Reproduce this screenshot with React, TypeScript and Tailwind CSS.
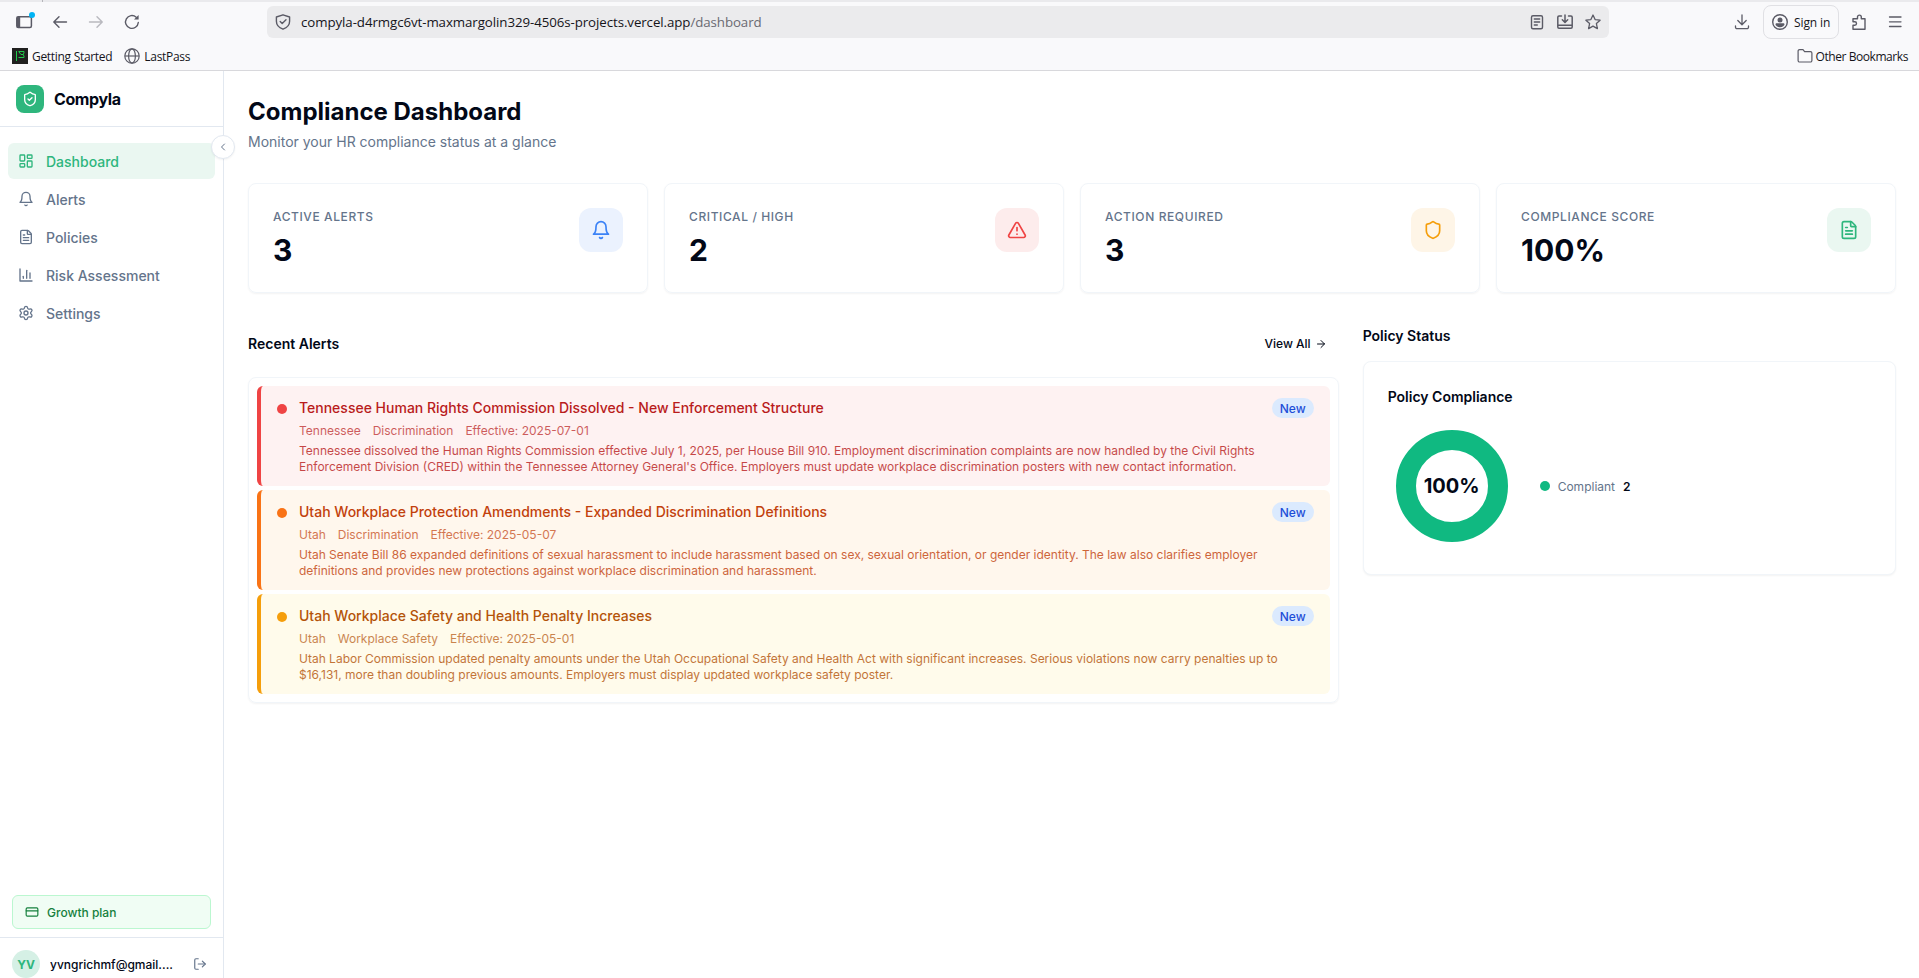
import React from "react";
import { ArrowRight, ChevronLeft, CreditCard, FileText, LayoutDashboard, LogOut, Settings, Shield, ShieldCheck, TriangleAlert } from "lucide-react";

type IconProps = { className?: string; strokeWidth?: number };

const Svg = ({ className, strokeWidth = 2, children }: IconProps & { children: React.ReactNode }) => (
  <svg
    viewBox="0 0 24 24"
    fill="none"
    stroke="currentColor"
    strokeWidth={strokeWidth}
    strokeLinecap="round"
    strokeLinejoin="round"
    className={className}
  >
    {children}
  </svg>
);

const BellIcon = (props: IconProps) => (
  <Svg {...props}>
    <path d="M6 8a6 6 0 0 1 12 0c0 7 3 9 3 9H3s3-2 3-9" />
    <path d="M10.3 21a1.94 1.94 0 0 0 3.4 0" />
  </Svg>
);

const ChartIcon = (props: IconProps) => (
  <Svg {...props}>
    <path d="M3 3v18h18" />
    <path d="M18 17V9" />
    <path d="M13 17V5" />
    <path d="M8 17v-3" />
  </Svg>
);

const navItems = [
  { label: "Dashboard", icon: LayoutDashboard, active: true },
  { label: "Alerts", icon: BellIcon },
  { label: "Policies", icon: FileText },
  { label: "Risk Assessment", icon: ChartIcon },
  { label: "Settings", icon: Settings },
];

const stats = [
  { label: "Active Alerts", value: "3", icon: BellIcon, color: "bg-[#ebf2fe] text-[#3b82f6]" },
  { label: "Critical / High", value: "2", icon: TriangleAlert, color: "bg-[#fdecec] text-[#ef4444]" },
  { label: "Action Required", value: "3", icon: Shield, color: "bg-[#fef5e7] text-[#f59e0b]" },
  { label: "Compliance Score", value: "100%", icon: FileText, color: "bg-[#eaf7f1] text-[#2eb67d]" },
];

const alerts = [
  {
    title: "Tennessee Human Rights Commission Dissolved - New Enforcement Structure",
    meta: ["Tennessee", "Discrimination", "Effective: 2025-07-01"],
    body: "Tennessee dissolved the Human Rights Commission effective July 1, 2025, per House Bill 910. Employment discrimination complaints are now handled by the Civil Rights Enforcement Division (CRED) within the Tennessee Attorney General's Office. Employers must update workplace discrimination posters with new contact information.",
    box: "bg-[#fef2f2] border-[#ef4444] text-[#b91c1c]",
    dot: "bg-[#ef4444]",
  },
  {
    title: "Utah Workplace Protection Amendments - Expanded Discrimination Definitions",
    meta: ["Utah", "Discrimination", "Effective: 2025-05-07"],
    body: "Utah Senate Bill 86 expanded definitions of sexual harassment to include harassment based on sex, sexual orientation, or gender identity. The law also clarifies employer definitions and provides new protections against workplace discrimination and harassment.",
    box: "bg-[#fff7ed] border-[#f97316] text-[#c2410c]",
    dot: "bg-[#f97316]",
  },
  {
    title: "Utah Workplace Safety and Health Penalty Increases",
    meta: ["Utah", "Workplace Safety", "Effective: 2025-05-01"],
    body: "Utah Labor Commission updated penalty amounts under the Utah Occupational Safety and Health Act with significant increases. Serious violations now carry penalties up to $16,131, more than doubling previous amounts. Employers must display updated workplace safety poster.",
    box: "bg-[#fffbeb] border-[#f59e0b] text-[#b45309]",
    dot: "bg-[#f59e0b]",
  },
];

function BrowserBar() {
  return (
    <div className="h-[71px] shrink-0 bg-[#f9f9fb] border-b border-[#d8d8dc] text-[#5b5b66] font-['Open_Sans',sans-serif]">
      <div className="h-0.5 bg-[#eaeaed]">
        <div className="ml-[42px] w-px h-0.5 bg-[#b5b5ba]" />
      </div>
      <div className="flex items-center h-10 pl-4 pr-[17px]">
        <svg width="20" height="20" viewBox="0 0 20 20" fill="none">
          <rect x="0.8" y="4.8" width="14.6" height="10.6" rx="1.5" stroke="currentColor" strokeWidth="1.5" />
          <rect x="0.8" y="4.8" width="3.4" height="10.6" fill="currentColor" />
          <circle cx="16" cy="3" r="3" fill="#00b3f4" />
        </svg>
        <svg className="ml-4" width="16" height="16" viewBox="0 0 16 16" fill="none" stroke="currentColor" strokeWidth="1.4" strokeLinecap="round" strokeLinejoin="round">
          <path d="M14.5 8H2M7 2.8 1.8 8 7 13.2" />
        </svg>
        <svg className="ml-5 opacity-40" width="16" height="16" viewBox="0 0 16 16" fill="none" stroke="currentColor" strokeWidth="1.4" strokeLinecap="round" strokeLinejoin="round">
          <path d="M1.5 8H14M9 2.8 14.2 8 9 13.2" />
        </svg>
        <svg className="ml-5" width="16" height="16" viewBox="0 0 16 16" fill="none" stroke="currentColor" strokeWidth="1.4" strokeLinecap="round">
          <path d="M14.3 8.5A6.4 6.4 0 1 1 12.2 3.2" />
          <path d="M14.6 1v4.6H10z" fill="currentColor" stroke="none" />
        </svg>

        <div className="ml-[127px] flex h-8 w-[1342px] shrink-0 items-center rounded-md bg-[#ebebed] pl-2 pr-2">
          <svg width="16" height="16" viewBox="0 0 16 16" fill="none" stroke="currentColor" strokeWidth="1.4" strokeLinecap="round" strokeLinejoin="round">
            <path d="M8 .8 14.6 3v4.2c0 3.8-2.4 6.4-6.6 8-4.2-1.6-6.6-4.2-6.6-8V3z" />
            <path d="m5.2 7.6 2 2 3.8-3.8" />
          </svg>
          <span className="ml-[10px] pt-0.5 text-[13.3px] tracking-[-0.08px] text-[#15141a] whitespace-nowrap">
            compyla-d4rmgc6vt-maxmargolin329-4506s-projects.vercel.app<span className="text-[#6a6a72]">/dashboard</span>
          </span>
          <div className="ml-auto flex items-center gap-3">
            <svg width="16" height="16" viewBox="0 0 16 16" fill="none" stroke="currentColor" strokeWidth="1.4" strokeLinecap="round">
              <rect x="2.5" y="1.7" width="11" height="13" rx="1.5" />
              <path d="M5.3 5h5.4M5.3 8h5.4M5.3 11h3" />
            </svg>
            <svg width="16" height="16" viewBox="0 0 16 16" fill="none" stroke="currentColor" strokeWidth="1.5" strokeLinecap="round" strokeLinejoin="round">
              <path d="M4.5 2H2A1.2 1.2 0 0 0 .8 3.2V13A1.2 1.2 0 0 0 2 14.2h12a1.2 1.2 0 0 0 1.2-1.2V3.2A1.2 1.2 0 0 0 14 2h-2.5M1 11.2h14M8 1v7.3M5.3 5.8 8 8.5l2.7-2.7" />
            </svg>
            <svg width="16" height="16" viewBox="0 0 16 16" fill="none" stroke="currentColor" strokeWidth="1.3" strokeLinejoin="round">
              <path d="m8 1 2.1 4.6 5 .6-3.7 3.4 1 5L8 12.1l-4.4 2.5 1-5L.9 6.2l5-.6z" />
            </svg>
          </div>
        </div>

        <svg className="ml-auto" width="16" height="16" viewBox="0 0 16 16" fill="none" stroke="currentColor" strokeWidth="1.3" strokeLinecap="round" strokeLinejoin="round">
          <path d="M8 1v9.5M3.8 6.5 8 10.7l4.2-4.2M1.5 12v1.2A1.5 1.5 0 0 0 3 14.7h10a1.5 1.5 0 0 0 1.5-1.5V12" />
        </svg>
        <div className="ml-[13px] flex h-[34px] w-[76px] items-center rounded-lg border border-[#e0e0e4] pl-2">
          <svg width="16" height="16" viewBox="0 0 16 16" fill="none">
            <circle cx="8" cy="8" r="7.3" stroke="currentColor" strokeWidth="1.4" />
            <circle cx="8" cy="5.9" r="2.5" fill="currentColor" />
            <path d="M3.5 10.5c0-.8.5-1.2 1.3-1.2h6.4c.8 0 1.3.4 1.3 1.2 0 1-2 2.8-4.5 2.8s-4.5-1.8-4.5-2.8z" fill="currentColor" />
          </svg>
          <span className="ml-1.5 pt-0.5 text-xs tracking-[-0.1px] text-[#15141a] whitespace-nowrap">Sign in</span>
        </div>
        <svg className="ml-3" width="16" height="16" viewBox="0 0 16 16" fill="none" stroke="currentColor" strokeWidth="1.4" strokeLinejoin="round">
          <path d="M2 15.2v-4h1.8a1.7 1.7 0 0 0 0-3.4H2v-3h4.5V3a1.9 1.9 0 0 1 3.8 0v1.8H14v10.4z" />
        </svg>
        <svg className="ml-5" width="16" height="16" viewBox="0 0 16 16" stroke="currentColor" strokeWidth="1.3" strokeLinecap="round">
          <path d="M2.500 3H14M2.500 7.800H14M2.500 12.500H14" />
        </svg>
      </div>

      <div className="flex h-7 items-center pl-3 pr-3 text-xs tracking-[-0.3px] text-[#15141a]">
        <svg width="16" height="16" viewBox="0 0 16 16" fill="none">
          <rect width="16" height="16" fill="#20201f" />
          <path d="M4.5 3v10M6.500 3.500H12M7 4l2 2.500h2.500M12 3.500V5l-1 1.500 1 1.500v1.500H6.500" stroke="#1fc94b" />
        </svg>
        <span className="ml-1 pt-0.5">Getting Started</span>
        <svg className="ml-3 text-[#5b5b66]" width="16" height="16" viewBox="0 0 16 16" fill="none" stroke="currentColor" strokeWidth="1.2">
          <circle cx="8" cy="8" r="7.2" />
          <ellipse cx="8" cy="8" rx="3.4" ry="7.2" />
          <path d="M1 8h14" />
        </svg>
        <span className="ml-1 pt-0.5">LastPass</span>
        <svg className="ml-auto text-[#5b5b66]" width="16" height="16" viewBox="0 0 16 16" fill="none" stroke="currentColor" strokeWidth="1.2" strokeLinejoin="round">
          <path d="M1.1 3.1a1.5 1.5 0 0 1 1.5-1.5H6l1.6 2h5.8a1.5 1.5 0 0 1 1.5 1.5v7.4a1.5 1.5 0 0 1-1.5 1.5H2.600a1.5 1.5 0 0 1-1.5-1.5z" />
        </svg>
        <span className="ml-[3px] pt-0.5 tracking-[-0.43px]">Other Bookmarks</span>
      </div>
    </div>
  );
}

function Sidebar() {
  return (
    <aside className="relative flex w-56 shrink-0 flex-col border-r border-[#e2e8f0] bg-white">
      <div className="flex h-14 shrink-0 items-center gap-2.5 border-b border-[#e2e8f0] px-4">
        <div className="flex size-7 items-center justify-center rounded-lg bg-[#2eb67d] text-white">
          <ShieldCheck size={16} />
        </div>
        <span className="text-base font-bold tracking-tight">Compyla</span>
      </div>

      <button className="absolute top-16 -right-3 flex size-6 items-center justify-center rounded-full border border-[#e2e8f0] bg-white text-[#64748b] shadow-xs">
        <ChevronLeft size={12} />
      </button>

      <nav className="flex flex-1 flex-col gap-0.5 px-2 py-4">
        {navItems.map(({ label, icon: Icon, active }) => (
          <a
            key={label}
            className={`flex h-9 items-center gap-3 rounded-md px-2.5 text-sm font-medium ${
              active ? "bg-[#eaf7f1] text-[#2eb67d]" : "text-[#64748b]"
            }`}
          >
            <Icon className="size-4" />
            <span className="pt-0.5">{label}</span>
          </a>
        ))}
      </nav>

      <div className="px-3 pb-2">
        <div className="flex h-[34px] items-center gap-2 rounded-md border border-[#bbf7d0] bg-[#f0fdf4] px-3 text-xs font-medium text-[#15803d]">
          <CreditCard size={14} />
          <span className="pt-0.5">Growth plan</span>
        </div>
      </div>
      <div className="flex shrink-0 items-center border-t border-[#e2e8f0] px-3 pt-3">
        <div className="flex size-7 items-center justify-center rounded-full bg-[#d5f0e5] pt-0.5 text-xs font-bold text-[#2eb67d]">YV</div>
        <span className="ml-2.5 w-[125px] truncate pt-0.5 text-xs font-medium">yvngrichmf@gmail....</span>
        <LogOut size={14} className="ml-auto mr-1 text-[#64748b]" />
      </div>
    </aside>
  );
}

function PolicyCard() {
  return (
    <div className="h-[214px] rounded-lg border border-[#f1f5f9] bg-white p-6 shadow-xs">
      <h3 className="pt-px text-sm font-semibold leading-5">Policy Compliance</h3>
      <div className="mt-[15px] flex items-center gap-6">
        <div className="relative size-32">
          <svg viewBox="0 0 128 128" className="size-32">
            <circle cx="64" cy="64" r="46" fill="none" stroke="#10b981" strokeWidth="20" />
          </svg>
          <div className="absolute inset-0 flex items-center justify-center text-xl font-bold">100%</div>
        </div>
        <div className="flex items-center text-xs">
          <span className="mr-2 size-2.5 rounded-full bg-[#10b981]" />
          <span className="pt-px text-[#64748b]">Compliant</span>
          <span className="ml-2 pt-px font-semibold">2</span>
        </div>
      </div>
    </div>
  );
}

export default function App() {
  return (
    <div className="w-full overflow-hidden">
      <div className="flex h-[978px] w-[1920px] flex-col overflow-hidden bg-white text-[#020817] font-[Inter,sans-serif]">
        <BrowserBar />
        <div className="flex min-h-0 flex-1">
          <Sidebar />
          <main className="flex-1 p-6">
            <h1 className="pt-px text-2xl font-bold">Compliance Dashboard</h1>
            <p className="mt-1 text-sm text-[#64748b]">Monitor your HR compliance status at a glance</p>

            <div className="mt-[31px] grid grid-cols-4 gap-4">
              {stats.map(({ label, value, icon: Icon, color }) => (
                <div key={label} className="flex h-[110px] items-start justify-between rounded-lg border border-[#f1f5f9] p-6 shadow-xs">
                  <div>
                    <p className="pt-px text-xs font-medium uppercase tracking-wider text-[#64748b]">{label}</p>
                    <p className="mt-[7px] text-3xl font-bold">{value}</p>
                  </div>
                  <div className={`flex size-11 items-center justify-center rounded-xl ${color}`}>
                    <Icon className="size-5" />
                  </div>
                </div>
              ))}
            </div>

            <div className="mt-8 grid grid-cols-3 items-start gap-6">
              <section className="col-span-2">
                <div className="flex h-9 items-center justify-between pt-px">
                  <h2 className="pt-px text-sm font-semibold">Recent Alerts</h2>
                  <button className="flex items-center gap-1 px-3 text-xs font-medium">
                    <span className="pt-px">View All</span>
                    <ArrowRight size={12} />
                  </button>
                </div>
                <div className="mt-4 flex flex-col gap-1 rounded-lg border border-[#f1f5f9] p-2 shadow-xs">
                  {alerts.map((a) => (
                    <div key={a.title} className={`flex h-[100px] items-start rounded-md border-l-4 px-4 py-3 ${a.box}`}>
                      <span className={`mt-[6px] size-2.5 shrink-0 rounded-full ${a.dot}`} />
                      <div className="ml-3 flex-1">
                        <div className="flex h-5 items-center justify-between">
                          <p className="text-sm font-medium leading-5">{a.title}</p>
                          <span className="rounded-full bg-[#dbeafe] px-2 pt-[3px] pb-px text-xs font-medium text-[#1d4ed8]">New</span>
                        </div>
                        <div className="mt-[5px] flex gap-3 text-xs opacity-70">
                          {a.meta.map((m) => (
                            <span key={m}>{m}</span>
                          ))}
                        </div>
                        <p className="mt-1 text-xs leading-4 opacity-80">{a.body}</p>
                      </div>
                    </div>
                  ))}
                </div>
              </section>

              <section>
                <h2 className="mb-[15px] pt-px text-sm font-semibold">Policy Status</h2>
                <PolicyCard />
              </section>
            </div>
          </main>
        </div>
      </div>
    </div>
  );
}
